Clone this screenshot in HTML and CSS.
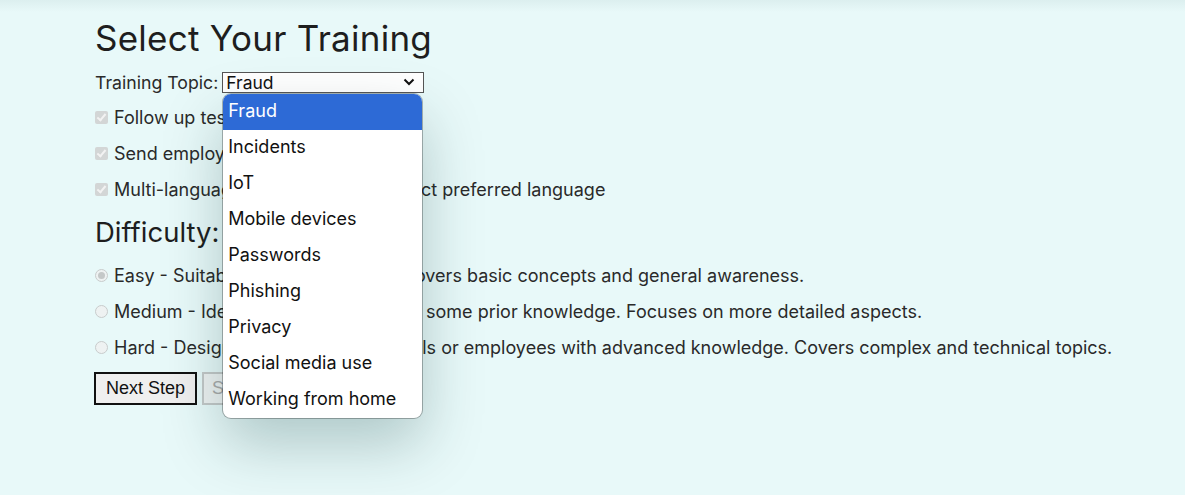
FILE: index.html
```html
<!DOCTYPE html>
<html>
<head>
<meta charset="utf-8">
<link rel="stylesheet" href="styles.css">
</head>
<body>
<div class="topshade"></div>
<main class="page">
  <h1 class="title">Select Your Training</h1>
  <div class="topic-row">
    <label class="topic-label" for="topic">Training Topic:</label>
    <div class="select-wrap">
      <div class="select" id="topic">
        <span>Fraud</span>
        <svg class="chev" width="12" height="8" viewBox="0 0 12 8"><path d="M1.5 1.5 L6 6 L10.5 1.5" fill="none" stroke="#111" stroke-width="2"/></svg>
      </div>
      <ul class="popup">
        <li class="opt selected">Fraud</li>
        <li class="opt">Incidents</li>
        <li class="opt">IoT</li>
        <li class="opt">Mobile devices</li>
        <li class="opt">Passwords</li>
        <li class="opt">Phishing</li>
        <li class="opt">Privacy</li>
        <li class="opt">Social media use</li>
        <li class="opt">Working from home</li>
      </ul>
    </div>
  </div>
  <div class="checks">
    <label class="row"><span class="box checked"></span>Follow up tests</label>
    <label class="row"><span class="box checked"></span>Send employee reminders</label>
    <label class="row"><span class="box checked"></span>Multi-language support - easily select preferred language</label>
  </div>
  <h2 class="sub">Difficulty:</h2>
  <div class="radios">
    <label class="row"><span class="radio on"></span>Easy - Suitable for all employees. Covers basic concepts and general awareness.</label>
    <label class="row"><span class="radio"></span>Medium - Ideal for people who have some prior knowledge. Focuses on more detailed aspects.</label>
    <label class="row"><span class="radio"></span>Hard - Designed for ICT professionals or employees with advanced knowledge. Covers complex and technical topics.</label>
  </div>
  <div class="buttons">
    <button class="btn primary">Next Step</button>
    <button class="btn disabled">Skip</button>
  </div>
</main>
</body>
</html>
```
FILE: styles.css
```css
html, body {
  margin: 0;
  padding: 0;
}
body {
  background: #e8f9f9;
  font-family: "Inter", "Open Sans", sans-serif;
  color: #222;
  height: 495px;
  overflow: hidden;
  position: relative;
}
.topshade {
  position: absolute;
  left: 0; right: 0; top: 0;
  height: 12px;
  background: linear-gradient(#dcefef, rgba(232,249,249,0));
}
.page {
  padding: 17px 0 0 95px;
}
.title {
  margin: 0;
  font-weight: 400;
  font-size: 35px;
  line-height: 42px;
  letter-spacing: 0.25px;
  color: #1e1e1e;
}
.topic-row {
  display: flex;
  align-items: center;
  margin-top: 12px;
  font-size: 17.7px;
  height: 22px;
  color: #2a2a2a;
}
.topic-label {
  margin-right: 4px;
}
.select-wrap {
  position: relative;
}
.select {
  height: 19px;
  border: 1px solid #555;
  background: #fff;
  display: flex;
  align-items: center;
  justify-content: space-between;
  padding: 0 8px 0 3px;
  box-sizing: content-box;
  width: 189px;
  font-size: 17.5px;
  color: #111;
}
.chev { display: block; }
.popup {
  position: absolute;
  left: 1px;
  top: 22px;
  width: 199px;
  margin: 0;
  padding: 0;
  list-style: none;
  background: #fff;
  border-radius: 8px;
  box-shadow: 0 0 0 1px rgba(0,0,0,0.28), 0 26px 60px rgba(0,50,50,0.25);
  overflow: hidden;
  z-index: 5;
}
.opt {
  height: 36px;
  line-height: 34px;
  padding-left: 5px;
  font-size: 18px;
  color: #111;
}
.opt.selected {
  background: #2d6ad6;
  color: #fff;
}
.checks {
  margin-top: 6px;
}
.row {
  display: flex;
  align-items: center;
  height: 36px;
  font-size: 18px;
  color: #2a2a2a;
}
.box {
  width: 13px;
  height: 13px;
  margin: 0 6px 0 0;
  border-radius: 2px;
  background: #d3d6d6;
  position: relative;
}
.box.checked::after {
  content: "";
  position: absolute;
  left: 4px;
  top: 1px;
  width: 3px;
  height: 7px;
  border: solid #f2f2f2;
  border-width: 0 2px 2px 0;
  transform: rotate(40deg);
}
.sub {
  margin: 9px 0 9px;
  font-weight: 400;
  font-size: 27.5px;
  line-height: 32px;
  color: #1e1e1e;
}
.radio {
  width: 11px;
  height: 11px;
  border: 1px solid #c8cccc;
  border-radius: 50%;
  margin: 0 6px 0 0;
  background: #eef2f2;
  position: relative;
}
.radio.on::after {
  content: "";
  position: absolute;
  left: 2px; top: 2px;
  width: 7px; height: 7px;
  border-radius: 50%;
  background: #c4c8c8;
}
.buttons {
  display: flex;
  gap: 5px;
  margin-top: 7px;
}
.btn {
  font-family: "Liberation Sans", Arial, sans-serif;
  font-size: 18px;
  height: 33px;
  padding: 0 8px;
  background: #efefef;
  color: #111;
  border: 2px solid #111;
}
.btn.primary {
  margin-left: -1px;
  padding: 0 10px;
}
.btn.disabled {
  border-color: #c4c8c8;
  color: #aaa;
  background: #eef2f2;
}
```
